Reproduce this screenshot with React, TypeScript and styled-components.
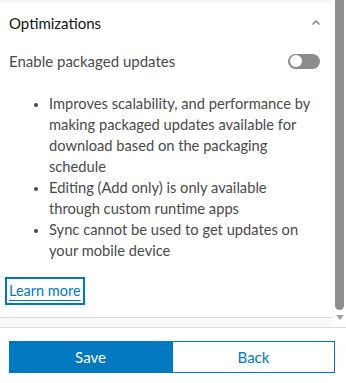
import React from 'react';
import styled, { createGlobalStyle } from 'styled-components';

const Global = createGlobalStyle`
  html, body {
    margin: 0;
    padding: 0;
    background: #fff;
  }
  body {
    font-family: Lato, 'Open Sans', sans-serif;
    color: #4a4a4a;
  }
`;

const Page = styled.div`
  width: 346px;
  height: 383px;
  display: flex;
  flex-direction: column;
  overflow: hidden;
`;

const ScrollArea = styled.div`
  height: 328px;
  display: flex;
  border-bottom: 1px solid #dcdcdc;
  box-sizing: border-box;
`;

const Content = styled.div`
  width: 332px;
  display: flex;
  flex-direction: column;
`;

const TopStrip = styled.div`
  height: 3px;
  background: #f8f8f8;
`;

const Header = styled.div`
  display: flex;
  align-items: center;
  justify-content: space-between;
  padding: 0 10px 0 9px;
  height: 40px;
  font-size: 15px;
  color: #151515;
`;

const Row = styled.div`
  display: flex;
  align-items: center;
  justify-content: space-between;
  padding: 0 12px 0 9px;
  height: 36px;
  font-size: 15px;
  color: #4a4a4a;
`;

const Toggle = styled.div`
  width: 32px;
  height: 15px;
  border-radius: 8px;
  background: #8c8c8c;
  display: flex;
  align-items: center;
  padding: 0 2px;
  box-sizing: border-box;
`;

const Knob = styled.div`
  width: 12px;
  height: 12px;
  border-radius: 50%;
  background: #fff;
`;

const List = styled.ul`
  margin: 14px 0 0;
  padding: 0 0 0 49px;
  font-size: 14.7px;
  line-height: 21px;
  color: #4a4a4a;
  li {
    padding-right: 14px;
  }
  li::marker {
    font-size: 12px;
  }
`;

const LinkWrap = styled.div`
  padding: 16px 0 0 5px;
`;

const Link = styled.a`
  display: inline-block;
  border: 2px solid #0079c1;
  padding: 3px 2px 4px;
  font-size: 14.5px;
  color: #0079c1;
  text-decoration: underline;
  text-underline-offset: 4px;
  text-decoration-thickness: 1px;
`;

const Spacer = styled.div`
  flex: 1;
`;

const BottomStrip = styled.div`
  height: 9px;
  background: #f8f8f8;
  border-top: 1px solid #dcdcdc;
`;

const Gutter = styled.div`
  width: 14px;
  display: flex;
  flex-direction: column;
  align-items: center;
  padding-left: 1px;
  box-sizing: border-box;
`;

const Thumb = styled.div`
  width: 9px;
  height: 310px;
  background: #8f8f8f;
  border-radius: 0 0 5px 5px;
`;

const Arrow = styled.div`
  margin-top: 5px;
  width: 0;
  height: 0;
  border-left: 4px solid transparent;
  border-right: 4px solid transparent;
  border-top: 5px solid #a3a3a3;
`;

const Footer = styled.div`
  display: flex;
  padding: 13px 11px 0 9px;
`;

const Button = styled.button<{ $primary?: boolean }>`
  flex: 1;
  height: 32px;
  font-family: Lato, 'Open Sans', sans-serif;
  font-size: 15px;
  border: 1px solid #0079c1;
  background: ${({ $primary }) => ($primary ? '#0079c1' : '#fff')};
  color: ${({ $primary }) => ($primary ? '#fff' : '#0079c1')};
  padding: 0;
`;

export default function App() {
  return (
    <Page>
      <Global />
      <ScrollArea>
        <Content>
          <TopStrip />
          <Header>
            <span>Optimizations</span>
            <svg width="12" height="12" viewBox="0 0 12 12">
              <path d="M2.5 7.5 L6 4 L9.5 7.5" fill="none" stroke="#6a6a6a" strokeWidth="1.1" />
            </svg>
          </Header>
          <Row>
            <span>Enable packaged updates</span>
            <Toggle>
              <Knob />
            </Toggle>
          </Row>
          <List>
            <li>
              Improves scalability, and performance by making packaged updates
              available for download based on the packaging schedule
            </li>
            <li>Editing (Add only) is only available through custom runtime apps</li>
            <li>Sync cannot be used to get updates on your mobile device</li>
          </List>
          <LinkWrap>
            <Link>Learn more</Link>
          </LinkWrap>
          <Spacer />
          <BottomStrip />
        </Content>
        <Gutter>
          <Thumb />
          <Arrow />
        </Gutter>
      </ScrollArea>
      <Footer>
        <Button $primary>Save</Button>
        <Button>Back</Button>
      </Footer>
    </Page>
  );
}
